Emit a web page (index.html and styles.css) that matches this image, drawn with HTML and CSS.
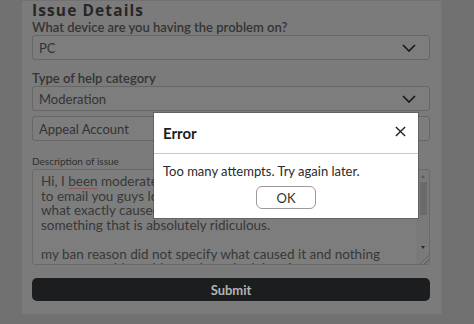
FILE: index.html
```html
<!DOCTYPE html>
<html lang="en">
<head>
  <meta charset="UTF-8" />
  <meta name="viewport" content="width=device-width, initial-scale=1.0" />
  <title>Support</title>
  <link rel="stylesheet" href="styles.css">
</head>
<body>
  <div class="page">
    <h2>Issue Details</h2>
    <div class="label">What device are you having the problem on?</div>
    <div class="select">
      <span>PC</span>
      <svg class="chevron" viewBox="0 0 14 8"><path d="M1 1l6 6 6-6" /></svg>
    </div>
    <div class="label second">Type of help category</div>
    <div class="select">
      <span>Moderation</span>
      <svg class="chevron" viewBox="0 0 14 8"><path d="M1 1l6 6 6-6" /></svg>
    </div>
    <div class="select third">
      <span>Appeal Account</span>
      <svg class="chevron" viewBox="0 0 14 8"><path d="M1 1l6 6 6-6" /></svg>
    </div>
    <div class="small-label">Description of issue</div>
    <div class="textarea">
      <div class="text">Hi, I <span class="typo">been</span> moderated for no reason
to email you guys lots of times
what exactly caused my ban, for
something that is absolutely ridiculous.

my ban reason did not specify what caused it and nothing
more was said, could you please look into it</div>
      <div class="scrollbar">
        <span class="arrow up"></span>
        <span class="thumb"></span>
        <span class="arrow down"></span>
        <span class="grip"></span>
      </div>
    </div>
    <button class="submit">Submit</button>
  </div>

  <div class="modal">
    <div class="modal-head">
      <span>Error</span>
      <svg class="close" viewBox="0 0 12 12"><path d="M1 1l10 10M11 1L1 11" /></svg>
    </div>
    <div class="modal-body">
      <p>Too many attempts. Try again later.</p>
      <button class="ok">OK</button>
    </div>
  </div>
</body>
</html>
```

FILE: styles.css
```css
body {
  margin: 0;
  background-color: #717171;
  font-family: Lato, "Open Sans", sans-serif;
  color: #2b2b2b;
  height: 324px;
  overflow: hidden;
}
.page {
  margin-left: 22px;
  width: 420px;
  height: 313px;
  padding: 0 11px 0 10px;
  box-sizing: border-box;
  background-color: #7b7b7b;
  border-right: 1px solid #767676;
}
h2 {
  margin: 1px 0 0;
  font-family: "Open Sans", sans-serif;
  font-size: 15.5px;
  line-height: 18px;
  font-weight: 700;
  letter-spacing: 1.1px;
  color: #262626;
}
.label {
  margin-top: 0;
  font-size: 13px;
  line-height: 16px;
  font-weight: 600;
  color: #343434;
}
.label.second {
  margin-top: 10px;
}
.select {
  height: 25px;
  box-sizing: border-box;
  border: 1px solid #676767;
  border-radius: 3px;
  padding: 0 13px 0 6px;
  display: flex;
  align-items: center;
  justify-content: space-between;
  font-size: 13px;
  color: #333;
  background-color: #7d7d7d;
}
.select.third {
  margin-top: 5px;
}
.chevron {
  width: 14px;
  height: 8px;
  fill: none;
  stroke: #161616;
  stroke-width: 1.6;
}
.small-label {
  margin-top: 13px;
  font-size: 10px;
  line-height: 14px;
  color: #2f2f2f;
}
.textarea {
  margin-top: 1px;
  height: 96px;
  box-sizing: border-box;
  border: 1px solid #6a6a6a;
  border-radius: 3px;
  display: flex;
  overflow: hidden;
  background-color: #7d7d7d;
}
.text {
  flex: 1;
  padding: 4px 8px;
  font-size: 13.5px;
  line-height: 14.5px;
  white-space: pre;
  overflow: hidden;
  color: #383838;
}
.typo {
  text-decoration: underline;
  text-decoration-color: #8c5a5a;
  text-underline-offset: 2px;
}
.scrollbar {
  width: 11px;
  position: relative;
  background-color: #7a7a7a;
  border-left: 1px solid #777;
}
.arrow {
  position: absolute;
  left: 3px;
  width: 0;
  height: 0;
  border-left: 2.5px solid transparent;
  border-right: 2.5px solid transparent;
}
.arrow.up {
  top: 5px;
  border-bottom: 3px solid #5a5a5a;
}
.arrow.down {
  top: 76px;
  border-top: 3px solid #2a2a2a;
}
.thumb {
  position: absolute;
  top: 12px;
  left: 2px;
  width: 7px;
  height: 33px;
  background-color: #6b6b6b;
}
.grip {
  position: absolute;
  bottom: 0;
  left: 0;
  width: 11px;
  height: 11px;
  background: linear-gradient(135deg, transparent 55%, #666 55%, #666 62%, transparent 62%, transparent 75%, #666 75%, #666 82%, transparent 82%);
}
.submit {
  display: block;
  width: 100%;
  margin-top: 13px;
  height: 23px;
  border: none;
  border-radius: 5px;
  background-color: #1c1d1f;
  color: #b4b4b4;
  font-family: Lato, "Open Sans", sans-serif;
  font-size: 13px;
  font-weight: 700;
}
.modal {
  position: absolute;
  left: 154px;
  top: 113px;
  width: 264px;
  height: 105px;
  background-color: #fff;
  box-shadow: 0 0 0 1px rgba(0, 0, 0, 0.2);
}
.modal-head {
  height: 41px;
  box-sizing: border-box;
  border-bottom: 1px solid #c9c9c9;
  padding: 0 12px 0 9px;
  display: flex;
  align-items: center;
  justify-content: space-between;
  font-size: 15px;
  font-weight: 700;
  color: #1e1e1e;
}
.close {
  width: 11px;
  height: 11px;
  fill: none;
  stroke: #222;
  stroke-width: 1.5;
  margin-top: -4px;
}
.modal-body {
  text-align: center;
}
.modal-body p {
  margin: 0;
  padding: 10px 9px 0;
  text-align: left;
  font-size: 13px;
  line-height: 14px;
  color: #2a2a2a;
}
.ok {
  margin-top: 8px;
  width: 60px;
  height: 23px;
  border: 1px solid #9a9a9a;
  border-radius: 6px;
  background-color: #fff;
  color: #333;
  font-family: Lato, "Open Sans", sans-serif;
  font-size: 13px;
}
```
